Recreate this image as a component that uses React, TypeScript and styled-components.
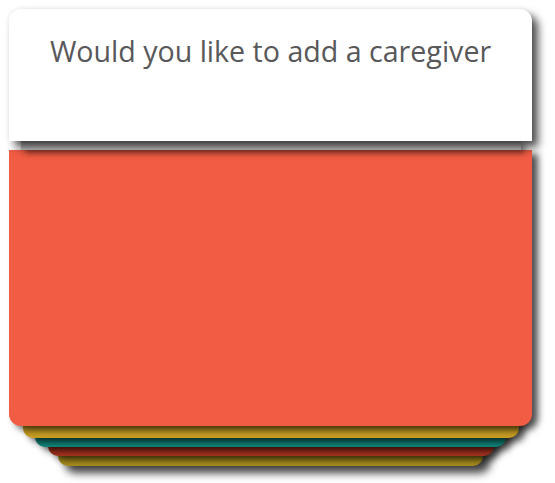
import React from 'react';
import styled, { createGlobalStyle } from 'styled-components';

const GlobalStyle = createGlobalStyle`
    html, body {
        margin: 0;
        padding: 0;
        background: #ffffff;
    }
    body {
        font-family: "Segoe UI", "Open Sans", "Noto Sans", sans-serif;
    }
`;

const Page = styled.div`
    padding: 9px 23px 20px 9px;
    width: 523px;
`;

const Deck = styled.div`
    display: flex;
    flex-direction: column;
    align-items: center;
`;

const QuestionCard = styled.div`
    position: relative;
    z-index: 10;
    width: 100%;
    height: 132px;
    background: #ffffff;
    border-radius: 12px 12px 0 0;
    box-shadow: 6px 6px 8px rgba(0, 0, 0, 0.7), -1px -1px 4px rgba(0, 0, 0, 0.06);
    box-sizing: border-box;
    padding-top: 22px;
    text-align: center;
    color: #58585a;
    font-size: 28.6px;
`;

const Spacer = styled.div`
    position: relative;
    z-index: 9;
    width: 500px;
    height: 9px;
    background: #c4c4c4;
    box-shadow: 4px 3px 6px rgba(0, 0, 0, 0.5);
`;

const MainCard = styled.div`
    position: relative;
    z-index: 8;
    width: 100%;
    height: 276px;
    background: #f15c44;
    border-radius: 0 0 12px 12px;
    box-shadow: 6px 4px 7px rgba(0, 0, 0, 0.7);
`;

interface LayerProps {
    $width: number;
    $color: string;
    $z: number;
    $show: number;
}

const Layer = styled.div<LayerProps>`
    position: relative;
    z-index: ${(p) => p.$z};
    width: ${(p) => p.$width}px;
    height: ${(p) => p.$show + 14}px;
    margin-top: -14px;
    background: ${(p) => p.$color};
    border-radius: 0 0 10px 10px;
    box-shadow: 6px 4px 7px rgba(0, 0, 0, 0.7);

    &:last-child {
        box-shadow: 7px 7px 9px rgba(0, 0, 0, 0.75);
    }
`;

const layers = [
    { width: 496, color: '#c89e22', show: 12 },
    { width: 471, color: '#108a7e', show: 9 },
    { width: 446, color: '#ac3420', show: 9 },
    { width: 425, color: '#ac901e', show: 10 },
];

const App: React.FC = () => {
    return (
        <>
            <GlobalStyle />
            <Page>
                <Deck>
                    <QuestionCard>Would you like to add a caregiver</QuestionCard>
                    <Spacer />
                    <MainCard />
                    {layers.map((l, i) => (
                        <Layer key={i} $width={l.width} $color={l.color} $show={l.show} $z={7 - i} />
                    ))}
                </Deck>
            </Page>
        </>
    );
};

export default App;
